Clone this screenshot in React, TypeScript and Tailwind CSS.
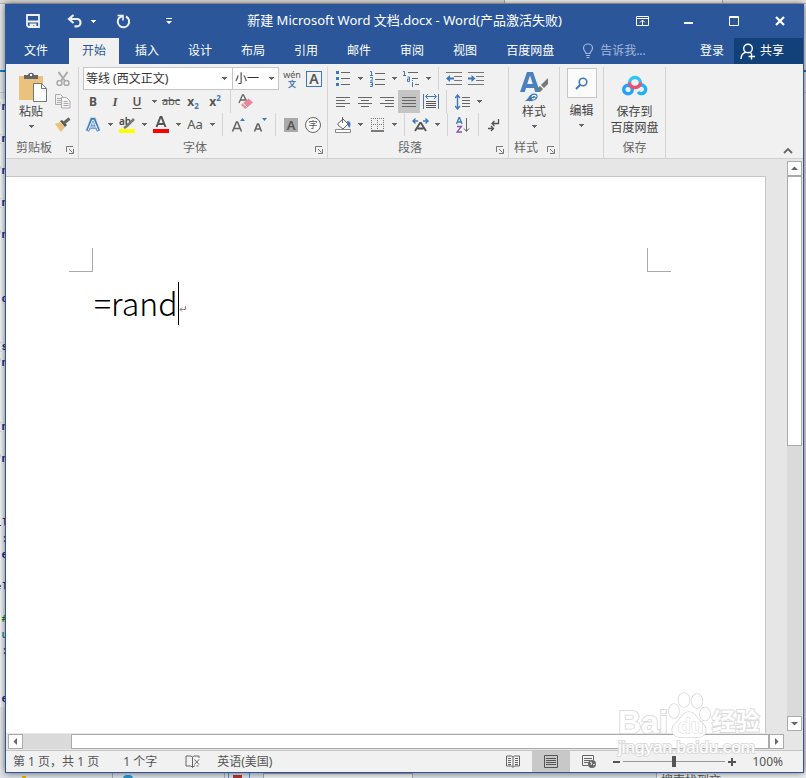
import React from 'react';
import clsx from 'clsx';

const TABS = ['开始', '插入', '设计', '布局', '引用', '邮件', '审阅', '视图', '百度网盘'];

// Lines of the editor window that show behind Word
const CODE_LINES = [
  '"n', '', '[n', '', '"n', '', '[n', '', '"n', '', '', '', '.c', '', '', '[s', '"n', '', '', '', '[n', '', '"n',
  '', '', '', 'il', ' :', '.e', '', 'el', '', '#', 'u', ' :', '', '', '.e',
];

const Arrow: React.FC<{ className?: string }> = ({ className }) => (
  <svg width="5" height="3" viewBox="0 0 5 3" className={clsx('shrink-0', className)} shapeRendering="crispEdges">
    <path d="M0 0h5v1H0zM1 1h3v1H1zM2 2h1v1H2z" fill="currentColor" />
  </svg>
);

const DropArrow: React.FC = () => (
  <button className="flex w-3 items-center justify-center text-[#666]" aria-label="更多">
    <Arrow />
  </button>
);

const Sep: React.FC = () => <div className="mx-1 w-px bg-[#d4d4d4]" />;

const Tool: React.FC<{ label: string; active?: boolean; children: React.ReactNode }> = ({ label, active, children }) => (
  <button
    aria-label={label}
    className={clsx('flex w-[22px] shrink-0 items-center justify-center', active && 'bg-[#c5c5c5]')}
  >
    {children}
  </button>
);

const Icon: React.FC<{ w?: number; h?: number; children: React.ReactNode }> = ({ w = 18, h = 18, children }) => (
  <svg width={w} height={h} viewBox={`0 0 ${w} ${h}`} fill="none" className="shrink-0">
    {children}
  </svg>
);

const Lines: React.FC<{ d: string }> = ({ d }) => (
  <Icon w={16} h={14}>
    <path d={d} stroke="#666" />
  </Icon>
);

const Row: React.FC<{ children: React.ReactNode }> = ({ children }) => <div className="flex h-[23px]">{children}</div>;

interface GroupProps {
  label: string;
  launcher?: boolean;
  className?: string;
  children: React.ReactNode;
}

const Group: React.FC<GroupProps> = ({ label, launcher, className, children }) => (
  <section className={clsx('flex shrink-0 flex-col border-r border-[#d4d4d4]', className)}>
    <div className="h-[71px]">{children}</div>
    <div className="flex h-5 items-center text-[#666]">
      <span className="flex-1 text-center">{label}</span>
      {launcher && (
        <button className="px-1 pt-1" aria-label={label + '设置'}>
          <Icon w={8} h={8}>
            <path d="M0.5 6V0.5H7M3 3l3.5 3.5M7.5 3v4.5H3" stroke="#777" />
          </Icon>
        </button>
      )}
    </div>
  </section>
);

const TitleBar: React.FC = () => (
  <header className="flex h-[34px] items-center text-white">
    <div className="flex flex-1 items-center">
      <div className="ml-4 flex">
        <Tool label="保存">
          <Icon w={14} h={14}>
            <path d="M1 1h12v12H2.500L1 11.500zM1 7.500h12M4.500 13v-2.500h5V13" stroke="#f0f0f0" strokeWidth="1.800" />
            <path d="M5 11h2v2H5z" fill="#f0f0f0" />
          </Icon>
        </Tool>
      </div>
      <div className="ml-5 flex">
        <Tool label="撤消">
          <Icon w={16} h={14}>
            <path d="M6.500 1L2 5l4.500 4M2.500 5H10a3.500 3.700 0 0 1 0 7.400H7.500" stroke="#f0f0f0" strokeWidth="2.200" />
          </Icon>
        </Tool>
        <button className="flex w-[14px] items-center justify-center" aria-label="撤消列表">
          <Arrow />
        </button>
      </div>
      <div className="ml-3 flex">
        <Tool label="重复">
          <Icon w={15} h={15}>
            <path d="M10 2.500A5.700 5.700 0 1 1 3.500 3.500L6.500 2" stroke="#f0f0f0" strokeWidth="2" />
            <path d="M1.500 1.500H7v5" stroke="#f0f0f0" strokeWidth="1.600" />
          </Icon>
        </Tool>
      </div>
      <div className="ml-6 flex">
        <Tool label="自定义快速访问工具栏">
          <Icon w={6} h={6}>
            <path d="M0 0h6v1H0zM0 3h6L3 6z" fill="#fff" />
          </Icon>
        </Tool>
      </div>
    </div>
    <h1 className="text-[13px] whitespace-nowrap">新建 Microsoft Word 文档.docx - Word(产品激活失败)</h1>
    <div className="flex flex-1 justify-end">
      <button className="flex w-[46px] items-center justify-center" aria-label="功能区显示选项">
        <Icon w={13} h={10}>
          <path d="M0.500 0.500h12v9H0.500zM0.500 2.500h12M6.500 9V4M4 6.500l2.500-2.500L9 6.500" stroke="#fff" />
        </Icon>
      </button>
      <button className="flex w-[46px] items-center justify-center" aria-label="最小化">
        <Icon w={9} h={10}>
          <path d="M0 7h9" stroke="#fff" strokeWidth="2" />
        </Icon>
      </button>
      <button className="flex w-[46px] items-center justify-center" aria-label="最大化">
        <Icon w={10} h={10}>
          <path d="M0.500 0.500h9v9H0.500zM0 1.500h10" stroke="#fff" />
        </Icon>
      </button>
      <button className="flex w-[46px] items-center justify-center" aria-label="关闭">
        <Icon w={10} h={10}>
          <path d="M1 1l8 8M9 1L1 9" stroke="#fff" strokeWidth="2.200" />
        </Icon>
      </button>
    </div>
  </header>
);

const TabBar: React.FC = () => (
  <nav className="flex h-[26px] gap-[3px] text-white">
    <button className="w-[60px]">文件</button>
    {TABS.map((tab, i) => (
      <button key={tab} className={clsx('px-[13px]', i === 0 && 'bg-[#f1f1f1] text-[#2b579a]')}>
        {tab}
      </button>
    ))}
    <button className="flex items-center gap-[6px] px-3 text-[#a3b8da]">
      <Icon w={12} h={16}>
        <path
          d="M4 10.500C4 8.500 1.500 8 1.500 5a4.500 4 0 0 1 9 0C10.500 8 8 8.500 8 10.500zM4 12.500h4M4.500 14.500h3"
          stroke="#a3b8da"
          strokeWidth="1.200"
        />
      </Icon>
      告诉我...
    </button>
    <div className="ml-auto flex">
      <button className="px-[10px]">登录</button>
      <button className="flex w-[69px] items-center gap-1 bg-[#124078] pl-[6px]">
        <Icon w={16} h={17}>
          <circle cx="8" cy="5.500" r="4.300" stroke="#fff" strokeWidth="1.400" />
          <path d="M1 16c0-4 2-6 5-7M10 9.500l1.500 1M8.500 13.500H15M11.500 10.500v6" stroke="#fff" strokeWidth="1.400" />
        </Icon>
        共享
      </button>
    </div>
  </nav>
);

const ClipboardGroup: React.FC = () => (
  <Group label="剪贴板" launcher className="w-[73px]">
    <div className="flex">
      <button className="flex w-[46px] flex-col items-start pt-[5px] pl-[13px]">
        <Icon w={28} h={32}>
          <path d="M0 4h24v24H0z" fill="#eac27b" />
          <path d="M5 7V3h4c0-3 6-3 6 0h4v4z" fill="#666" />
          <path d="M11 2h2v2h-2z" fill="#fff" />
          <path d="M14.500 11.500h8l5 5v13h-13z" fill="#fff" stroke="#777" />
          <path d="M22.500 11.500v5h5" stroke="#777" />
        </Icon>
        <span className="leading-4">粘贴</span>
        <Arrow className="mt-[5px] ml-[10px] text-[#666]" />
      </button>
      <div className="flex flex-col">
        <Row>
          <Tool label="剪切">
            <Icon w={14} h={16}>
              <path d="M2.500 1l6.500 9M11.500 1L5 10" stroke="#aaa" strokeWidth="2" />
              <circle cx="3.500" cy="12" r="2.500" stroke="#aaa" strokeWidth="1.500" />
              <circle cx="10.500" cy="12" r="2.500" stroke="#aaa" strokeWidth="1.500" />
            </Icon>
          </Tool>
        </Row>
        <Row>
          <Tool label="复制">
            <Icon w={16} h={15}>
              <path d="M0.500 0.500h5l3 3v7h-8zM2 4.500h4M2 6.500h4M2 8.500h4" stroke="#b0a8b0" />
              <path d="M6.500 3.500h5l3.500 3.500v7H6.500z" fill="#f6f3f6" stroke="#b0a8b0" />
              <path d="M8.500 7.500h4M8.500 9.500h5M8.500 11.500h5" stroke="#b0a8b0" />
            </Icon>
          </Tool>
        </Row>
        <Row>
          <Tool label="格式刷">
            <Icon w={16} h={15}>
              <path d="M0 7l5-2 5 5-4 5z" fill="#eac27b" />
              <path d="M5 4l2-1 5 5-2 2z" fill="#555" />
              <path d="M9 6l5.500-4.500" stroke="#666" strokeWidth="3" />
            </Icon>
          </Tool>
        </Row>
      </div>
    </div>
  </Group>
);

const FontGroup: React.FC = () => (
  <Group label="字体" launcher className="w-[249px]">
    <div className="pl-[3px] text-[#555]">
      <div className="flex h-[23px] items-center pl-px">
        <div className="relative h-full w-[150px]">
          <select aria-label="字体" className="h-full w-full appearance-none border border-[#c6c6c6] bg-white pl-[2px] text-[#333]">
            <option>等线 (西文正文)</option>
          </select>
          <Arrow className="pointer-events-none absolute top-[10px] right-[6px] text-[#666]" />
        </div>
        <div className="relative -ml-px h-full w-[47px]">
          <select aria-label="字号" className="h-full w-full appearance-none border border-[#c6c6c6] bg-white pl-[2px] text-[#333]">
            <option>小一</option>
          </select>
          <Arrow className="pointer-events-none absolute top-[10px] right-[5px] text-[#666]" />
        </div>
        <button className="ml-[2px] flex w-[22px] flex-col items-center text-[9px] leading-[11px]" aria-label="拼音指南">
          <span>wén</span>
          <span className="text-[8px] leading-[8px] font-bold text-[#3f78b8]">文</span>
        </button>
        <Tool label="字符边框">
          <span className="flex h-4 w-4 items-center justify-center border border-[#3f78b8] text-[14px] font-semibold">A</span>
        </Tool>
      </div>
      <Row>
        <Tool label="加粗">
          <b>B</b>
        </Tool>
        <Tool label="倾斜">
          <i className="font-[Liberation_Serif] text-[13px] font-bold">I</i>
        </Tool>
        <Tool label="下划线">
          <span className="font-semibold underline underline-offset-2">U</span>
        </Tool>
        <DropArrow />
        <Tool label="删除线">
          <span className="text-[11px] line-through">abc</span>
        </Tool>
        <Tool label="下标">
          <b>x</b>
          <b className="pt-2 text-[8px] text-[#3f78b8]">2</b>
        </Tool>
        <Tool label="上标">
          <b>x</b>
          <b className="pb-2 text-[8px] text-[#3f78b8]">2</b>
        </Tool>
        <Sep />
        <Tool label="清除所有格式">
          <Icon w={16} h={16}>
            <path d="M1 9l3.500-8h1L9 8M2.500 6h5" stroke="#666" strokeWidth="1.300" />
            <path d="M3 11l7.500-6.500L15 8.500 7.500 15z" fill="#e8879a" />
            <path d="M5 9.500l4.500 4" stroke="#fff" />
          </Icon>
        </Tool>
      </Row>
      <Row>
        <Tool label="文本效果">
          <Icon w={16} h={16}>
            <path d="M2.500 14L7 2.500h2L13.500 14M4.500 10h7" stroke="#b9d3ee" strokeWidth="4.500" />
            <path d="M2.500 14L7 2.500h2L13.500 14M4.500 10h7" stroke="#3f78b8" strokeWidth="3" />
            <path d="M3 13.500L7.500 3h1L13 13.500M4.500 10h7" stroke="#fff" />
          </Icon>
        </Tool>
        <DropArrow />
        <Tool label="突出显示">
          <Icon w={16} h={17}>
            <text x="0" y="9" fontSize="10" fontWeight="600" fill="#444">ab</text>
            <path d="M15 3L8 10l-3 2" stroke="#777" strokeWidth="2.500" />
            <path d="M0 13h16v4H0z" fill="#ff0" />
          </Icon>
        </Tool>
        <DropArrow />
        <Tool label="字体颜色">
          <Icon w={16} h={17}>
            <path d="M3.500 11L7.500 1h1l4 10M5 8h6" stroke="#555" strokeWidth="2" />
            <path d="M0 13h16v4H0z" fill="#f00" />
          </Icon>
        </Tool>
        <DropArrow />
        <Tool label="更改大小写">
          <span className="text-[13px]">Aa</span>
        </Tool>
        <DropArrow />
        <Sep />
        <Tool label="增大字号">
          <Icon w={14} h={16}>
            <path d="M1.500 14.500L5.500 5h1l4 9.500M3 11.500h6" stroke="#666" strokeWidth="1.600" />
            <path d="M9 4l2.500-3L14 4z" fill="#3f78b8" />
          </Icon>
        </Tool>
        <Tool label="减小字号">
          <Icon w={14} h={16}>
            <path d="M1.500 14.500L4.500 7h1l3 7.500M3 12h4.500" stroke="#666" strokeWidth="1.600" />
            <path d="M9 1h5l-2.500 3z" fill="#3f78b8" />
          </Icon>
        </Tool>
        <Sep />
        <Tool label="字符底纹">
          <span className="h-[14px] w-[14px] bg-[#aaa] text-[13px] leading-[14px] font-semibold">A</span>
        </Tool>
        <Tool label="带圈字符">
          <span className="flex h-4 w-4 items-center justify-center rounded-full border border-[#666] bg-white text-[9px] leading-none">
            字
          </span>
        </Tool>
      </Row>
    </div>
  </Group>
);

const ParagraphGroup: React.FC = () => (
  <Group label="段落" launcher className="w-[181px]">
    <div className="pl-1">
      <Row>
        <Tool label="项目符号">
          <Icon w={14} h={15}>
            <path d="M0 0h3v3H0zM0 6h3v3H0zM0 12h3v3H0z" fill="#3f78b8" />
            <path d="M5 1.500h9M5 7.500h9M5 13.500h9" stroke="#666" />
          </Icon>
        </Tool>
        <DropArrow />
        <Tool label="编号">
          <Icon w={15} h={16}>
            <path d="M0 .5h1.500v4M0 4.500h3M0 6.500h2.500v1.500L.5 10H3M0 11.500h2.500v4H0M.5 13.500h2" stroke="#3f78b8" />
            <path d="M5 2.500h10M5 8.500h10M5 13.500h10" stroke="#666" />
          </Icon>
        </Tool>
        <DropArrow />
        <Tool label="多级列表">
          <Icon w={17} h={16}>
            <path d="M0 .5h1.500v4M0 4.500h3M4.500 6h2v4.500h-2V8h2M9.500 9v1M9.500 11v5" stroke="#3f78b8" />
            <path d="M5 1.500h10M9 7.500h6M12 13.500h4" stroke="#666" />
          </Icon>
        </Tool>
        <DropArrow />
        <Sep />
        <Tool label="减少缩进量">
          <Icon w={16} h={14}>
            <path d="M0 .5h16M8 4.500h8M8 8.500h8M0 12.500h16" stroke="#777" />
            <path d="M0 6.500L4 3v2.500h4v2H4V10z" fill="#3f78b8" />
          </Icon>
        </Tool>
        <Tool label="增加缩进量">
          <Icon w={16} h={14}>
            <path d="M0 .5h16M8 4.500h8M8 8.500h8M0 12.500h16" stroke="#777" />
            <path d="M7.500 6.500L3.500 3v2.500H0v2h3.500V10z" fill="#3f78b8" />
          </Icon>
        </Tool>
      </Row>
      <Row>
        <Tool label="左对齐">
          <Lines d="M1 2.500h14M1 5.500h9M1 8.500h14M1 11.500h9" />
        </Tool>
        <Tool label="居中">
          <Lines d="M1 2.500h14M4 5.500h8M1 8.500h14M4 11.500h8" />
        </Tool>
        <Tool label="右对齐">
          <Lines d="M1 2.500h14M6 5.500h9M1 8.500h14M6 11.500h9" />
        </Tool>
        <Tool label="两端对齐" active>
          <Lines d="M1 2.500h14M1 5.500h14M1 8.500h14M1 11.500h14" />
        </Tool>
        <Tool label="分散对齐">
          <Icon w={16} h={15}>
            <path d="M.5 0v15M15.500 0v15M3 2.500h10M5 0L2.500 2.500 5 5M11 0l2.500 2.500L11 5" stroke="#3f78b8" />
            <path d="M3 7.500h10M3 9.500h10M3 11.500h10M3 13.500h10" stroke="#555" />
          </Icon>
        </Tool>
        <Sep />
        <Tool label="行距">
          <Icon w={15} h={16}>
            <path d="M2.500 1v14M0 4l2.500-3L5 4M0 12l2.500 3L5 12" stroke="#3f78b8" strokeWidth="1.400" />
            <path d="M7 3.500h8M7 6.500h8M7 9.500h8M7 12.500h8" stroke="#666" />
          </Icon>
        </Tool>
        <DropArrow />
      </Row>
      <Row>
        <Tool label="底纹">
          <Icon w={17} h={16}>
            <path d="M3 6.500L8 2l5 5-5 5-5-4zM7.500 6V0" fill="#fff" stroke="#666" />
            <path d="M12 4c4 0 4 3 2.500 7L12.500 8z" fill="#3f78b8" />
            <path d="M.5 12.500h15v3H.5z" fill="#fff" stroke="#888" />
          </Icon>
        </Tool>
        <DropArrow />
        <Tool label="边框">
          <Icon w={13} h={14}>
            <path d="M0 .5h13M0 6.500h13M.5 0v12M6.500 0v12M12.500 0v12" stroke="#777" strokeDasharray="1 1" />
            <path d="M0 13h13" stroke="#555" strokeWidth="1.500" />
          </Icon>
        </Tool>
        <DropArrow />
        <Sep />
        <Tool label="中文版式">
          <Icon w={17} h={14}>
            <path d="M3 13L8 5h1l5 8M5.500 10.500h6" stroke="#555" strokeWidth="1.800" />
            <path d="M6 3H1.500M3.500 .5L1 3l2.500 2.500M11 3h4.500M13.500.5L16 3l-2.500 2.500" stroke="#3f78b8" strokeWidth="1.400" />
          </Icon>
        </Tool>
        <DropArrow />
        <Sep />
        <Tool label="排序">
          <Icon w={14} h={16}>
            <path d="M.5 7L3 .5h.5L6 7M1.500 5h4" stroke="#3f78b8" strokeWidth="1.300" />
            <path d="M1 9.500h4.500L1 15h5" stroke="#8a56b0" strokeWidth="1.300" />
            <path d="M10.500 1v13M8 11.500l2.500 3 2.500-3" stroke="#666" />
          </Icon>
        </Tool>
        <Sep />
        <Tool label="显示编辑标记">
          <Icon w={12} h={14}>
            <path d="M10.500 1v4.500H4M6.500 3L4 5.500 6.500 8M0 10.500h5M3 8l2.500 2.500L3 13" stroke="#555" strokeWidth="1.300" />
          </Icon>
        </Tool>
      </Row>
    </div>
  </Group>
);

const Ribbon: React.FC = () => (
  <div className="flex border-b border-[#d0d0d0] bg-[#f1f1f1] pt-[3px] text-[#444]">
    <ClipboardGroup />
    <FontGroup />
    <ParagraphGroup />
    <Group label="样式" launcher className="w-[51px]">
      <button className="flex w-full flex-col items-center pt-[5px]">
        <Icon w={28} h={32}>
          <path d="M0 20L7 0h6l7 20h-4.800l-1.200-4H6l-1.200 4zM7.200 12h5.600L10 3.500z" fill="#4a80bd" />
          <path d="M28 6v6l-4 4-3-3z" fill="#777" />
          <path d="M20 14l3 3-3 3-3-3z" fill="#777" />
          <path d="M4 29c4-1 5-8 10-8 4 0 5 4 3 6-3 3-8 3-13 2z" fill="#3f78b8" stroke="#f1f1f1" />
          <path d="M12 25c0-2 4-2.500 4 0M12 26.500c2 1 3 0 3-1" stroke="#fff" strokeWidth="1.200" />
        </Icon>
        <span className="leading-4">样式</span>
        <Arrow className="mt-[5px] text-[#666]" />
      </button>
    </Group>
    <Group label="" className="w-[44px]">
      <button className="flex w-full flex-col items-center pt-px">
        <span className="flex h-[30px] w-[30px] items-center justify-center border border-[#c6c6c6] bg-[#fbfbfb]">
          <Icon w={13} h={13}>
            <circle cx="8" cy="5" r="3.800" stroke="#3f78b8" strokeWidth="1.600" />
            <path d="M5.500 7.500L1 12" stroke="#3f78b8" strokeWidth="2" />
          </Icon>
        </span>
        <span className="mt-[5px] leading-4">编辑</span>
        <Arrow className="mt-[5px] text-[#666]" />
      </button>
    </Group>
    <Group label="保存" className="w-[62px]">
      <button className="flex w-full flex-col items-center pt-2">
        <Icon w={26} h={21}>
          <circle cx="6" cy="14.500" r="4.300" stroke="#28a0f5" strokeWidth="3.400" />
          <path d="M15.500 12.500a4.300 4.300 0 1 1 .5 4.500" stroke="#1fb2f8" strokeWidth="3.400" />
          <path d="M7.500 8a5.500 5.500 0 0 1 11 0" stroke="#2fc3fa" strokeWidth="3.400" />
          <path d="M7.500 7.500a5.500 5 0 0 0 11 0" stroke="#f0506e" strokeWidth="3.400" />
        </Icon>
        <span className="mt-2 leading-4">
          保存到
          <br />
          百度网盘
        </span>
      </button>
    </Group>
    <button className="mt-auto mr-[10px] mb-1 ml-auto" aria-label="折叠功能区">
      <Icon w={10} h={7}>
        <path d="M1 6l4-4 4 4" stroke="#666" strokeWidth="1.800" />
      </Icon>
    </button>
  </div>
);

const ScrollButton: React.FC<{ label: string; d: string }> = ({ label, d }) => (
  <button
    aria-label={label}
    className="flex h-[15px] w-[15px] shrink-0 items-center justify-center border border-[#ababab] bg-white"
  >
    <Icon w={7} h={7}>
      <path d={d} fill="#666" />
    </Icon>
  </button>
);

const Document: React.FC = () => (
  <main className="flex min-h-0 flex-1 bg-[#e6e6e6]">
    <div className="flex min-w-0 flex-1 flex-col">
      <div className="mt-[17px] mr-[21px] flex-1 border-t border-r border-[#c6c6c6] bg-white pt-[71px]">
        <div className="flex justify-between pr-[94px] pl-[63px]">
          <div className="h-6 w-6 border-r border-b border-[#aaa]" />
          <div className="h-6 w-6 border-b border-l border-[#aaa]" />
        </div>
        <div className="mt-[10px] flex h-[43px] pl-[88px] text-black">
          <p className="font-['Noto_Sans_CJK_SC',sans-serif] text-[32px] leading-10 font-light">=rand</p>
          <span className="h-full w-px bg-black" />
          <span className="mt-6">
            <Icon w={7} h={6}>
              <path d="M6.500 0v3.500H1M3 1.500l-2 2 2 2" stroke="#888" />
            </Icon>
          </span>
        </div>
      </div>
      <div className="flex h-[17px] items-center pr-[3px] pl-[2px]">
        <ScrollButton label="向左滚动" d="M5 0v7L1.500 3.500z" />
        <div className="flex h-[15px] flex-1 bg-[#dadada] pl-[48px]">
          <div className="flex-1 border border-[#ababab] bg-white" />
        </div>
        <ScrollButton label="向右滚动" d="M2 0v7l3.500-3.500z" />
      </div>
    </div>
    <div className="mt-[2px] mr-px mb-[19px] flex w-[15px] flex-col bg-[#dadada]">
      <ScrollButton label="向上滚动" d="M0 5h7L3.500 1.500z" />
      <div className="flex-1">
        <div className="h-1/2 border border-[#ababab] bg-white" />
      </div>
      <ScrollButton label="向下滚动" d="M0 2h7L3.500 5.500z" />
    </div>
  </main>
);

const StatusBar: React.FC = () => (
  <footer className="flex h-[22px] items-center border-t border-[#c6c6c6] bg-[#f1f1f1] pr-5 pl-[7px] text-[#555]">
    <span>第 1 页，共 1 页</span>
    <span className="ml-6">1 个字</span>
    <button className="ml-7" aria-label="校对">
      <Icon w={16} h={14}>
        <path d="M7.500 2L6 1H1v10h5l1.500 1.500V2L9 1h5v2M7.500 12.500L9 11h1M11.500 11h2M9.500 4.500l4.500 5M14 4.500l-4.500 5" stroke="#666" />
      </Icon>
    </button>
    <span className="ml-4">英语(美国)</span>
    <div className="ml-auto flex h-full items-center">
      <button className="mr-3" aria-label="阅读视图">
        <Icon w={14} h={13}>
          <path d="M.5 1h5L7 2l1.500-1h5v10h-5L7 12.500 5.500 11h-5zM7 2v10" stroke="#666" />
          <path d="M2 3.500h3M2 5.500h3M2 7.500h3M2 9.500h3M9 3.500h3M9 5.500h3M9 7.500h3M9 9.500h3" stroke="#666" />
        </Icon>
      </button>
      <button className="flex h-full w-[38px] items-center justify-center bg-[#c8c8c8]" aria-label="页面视图">
        <Icon w={14} h={13}>
          <path d="M.5.500h13v12H.5zM2 3.500h10M2 5.500h10M2 7.500h10M2 9.500h10" stroke="#555" />
        </Icon>
      </button>
      <button className="ml-3" aria-label="Web 版式视图">
        <Icon w={15} h={14}>
          <path d="M6 10.500H.5v-10h11V5M2 3.500h8M2 5.500h6M2 7.500h4" stroke="#666" />
          <circle cx="10" cy="9" r="4" fill="#666" />
          <path d="M8 7l2 1-1 2M11 10l2-1" stroke="#f1f1f1" />
        </Icon>
      </button>
      <button className="ml-4 h-[2px] w-[7px] bg-[#555]" aria-label="缩小" />
      <input
        type="range"
        aria-label="缩放"
        defaultValue={50}
        className="mx-[3px] h-3 w-[102px] appearance-none bg-transparent [&::-webkit-slider-runnable-track]:h-px [&::-webkit-slider-runnable-track]:bg-[#999] [&::-webkit-slider-thumb]:-mt-[5px] [&::-webkit-slider-thumb]:h-[11px] [&::-webkit-slider-thumb]:w-1 [&::-webkit-slider-thumb]:appearance-none [&::-webkit-slider-thumb]:bg-[#555]"
      />
      <button aria-label="放大">
        <Icon w={8} h={8}>
          <path d="M4 0v8M0 4h8" stroke="#555" strokeWidth="2" />
        </Icon>
      </button>
      <span className="ml-4">100%</span>
    </div>
  </footer>
);

const Watermark: React.FC = () => (
  <div className="pointer-events-none absolute right-[44px] bottom-5 w-[144px] font-['Liberation_Sans','Noto_Sans_CJK_SC',sans-serif] text-white [paint-order:stroke] [-webkit-text-stroke:2px_#dcdcdc]">
    <div className="flex items-end">
      <span className="text-[32px] leading-8 font-bold">Bai</span>
      <svg width="44" height="46" viewBox="0 0 44 46" fill="#fff" stroke="#d8d8d8" strokeWidth="1.500">
        <ellipse cx="6" cy="19" rx="5" ry="7" />
        <ellipse cx="16" cy="8" rx="5.500" ry="7" />
        <ellipse cx="29" cy="9" rx="5.500" ry="7" />
        <ellipse cx="37" cy="22" rx="5" ry="6.500" />
        <path d="M21 20c6 0 8 7 14 12 5 5 3 13-5 13H12c-8 0-10-8-5-13 6-5 8-12 14-12z" />
        <text x="10" y="41" fontSize="21" fontWeight="700" strokeWidth="1">du</text>
      </svg>
      <span className="text-[24px] leading-8 font-bold">经验</span>
    </div>
    <div className="text-[17px] leading-5">jingyan.baidu.com</div>
  </div>
);

// Slice of the desktop left visible around the window
const Backdrop: React.FC = () => (
  <div className="absolute inset-0 overflow-hidden bg-[#e9e9ec]" aria-hidden="true">
    <div className="flex h-1 border-b border-[#b5b5b5]">
      <div className="w-[505px] border-r border-[#aaa] bg-[#dcdcdc]" />
      <div className="w-[218px] border-r border-[#aaa] bg-[#f4f4f4]" />
    </div>
    <div className="mt-[66px] h-[2px] bg-[#1c7cc0]" />
    <div className="mt-5 h-[7px] border-t border-[#c5cad8]" />
    <div className="w-[5px] overflow-hidden bg-[#f7f7f7] font-[Liberation_Mono] text-[11px] leading-4 font-bold">
      {CODE_LINES.map((line, i) => (
        <div
          key={i}
          className={clsx('flex h-4 justify-end', line === '#' ? 'text-[#008000]' : line === 'u' ? 'text-[#2b91af]' : 'text-[#1c2c90]')}
        >
          <span className="-mr-[3px] whitespace-pre">{line}</span>
        </div>
      ))}
    </div>
    <div className="absolute inset-x-0 bottom-0 flex h-[5px] bg-[#dfe2ea] pl-2">
      <div className="w-[105px] border-r border-[#aab] pl-[14px]">
        <div className="mt-[3px] h-1 w-1 bg-[#e8b800]" />
      </div>
      <div className="w-[112px] border-r border-[#aab] pl-[10px]">
        <div className="mt-[2px] h-2 w-[10px] rounded-full bg-[#1e9bd0]" />
      </div>
      <div className="mx-[3px] w-[22px] border-x border-[#3b9ae8] pl-1">
        <div className="mt-[2px] h-1 w-[9px] bg-[#b03a30]" />
      </div>
      <div className="ml-[10px] w-[150px] border border-b-0 border-[#aab] bg-[#f2f2f2]" />
      <div className="ml-auto w-[150px] border-l border-[#aab] bg-[#f2f2f2] pt-[2px] pl-1 leading-3 text-[#555]">搜索找到文</div>
    </div>
  </div>
);

const App: React.FC = () => {
  return (
    <div className="relative h-screen overflow-hidden pt-1 pr-[2px] pb-[5px] pl-[5px] font-['Noto_Sans','Noto_Sans_CJK_SC',sans-serif] text-[12px]">
      <Backdrop />
      <div className="relative flex h-full flex-col border-x border-b border-[#2b579a] bg-[#2b579a] shadow-[0_0_7px_rgba(0,0,0,0.6)]">
        <TitleBar />
        <TabBar />
        <Ribbon />
        <Document />
        <StatusBar />
      </div>
      <Watermark />
    </div>
  );
};

export default App;
